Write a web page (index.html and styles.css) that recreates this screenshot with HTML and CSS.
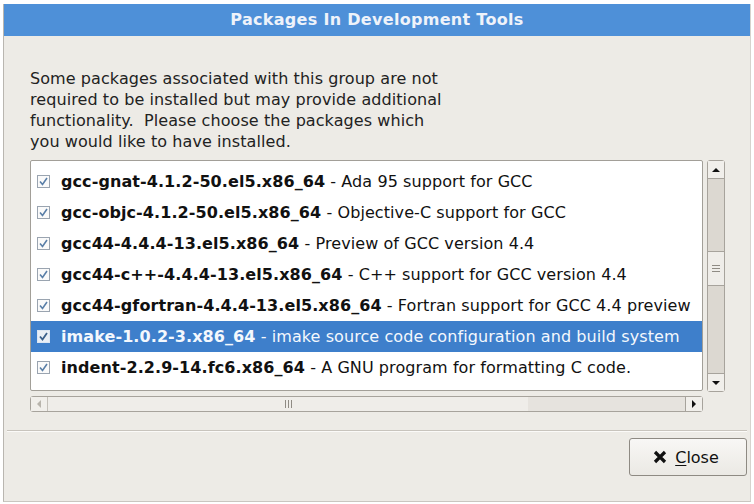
FILE: index.html
```html
<!DOCTYPE html>
<html>
<head>
<meta charset="utf-8">
<link rel="stylesheet" href="styles.css">
</head>
<body>
<div class="dialog">
  <div class="titlebar">Packages In Development Tools</div>
  <div class="content">
    <p class="intro">Some packages associated with this group are not<br>required to be installed but may provide additional<br>functionality.&nbsp; Please choose the packages which<br>you would like to have installed.</p>
    <div class="listwrap">
      <div class="listarea">
        <div class="list">
          <div class="row"><span class="cb"><svg width="11" height="11" viewBox="0 0 11 11"><path d="M2 5.5 L4.5 8.5 L9 2" fill="none" stroke="#5a7fa8" stroke-width="1.6"/></svg></span><b>gcc-gnat-4.1.2-50.el5.x86_64</b>&nbsp;- Ada 95 support for GCC</div>
          <div class="row"><span class="cb"><svg width="11" height="11" viewBox="0 0 11 11"><path d="M2 5.5 L4.5 8.5 L9 2" fill="none" stroke="#5a7fa8" stroke-width="1.6"/></svg></span><b>gcc-objc-4.1.2-50.el5.x86_64</b>&nbsp;- Objective-C support for GCC</div>
          <div class="row"><span class="cb"><svg width="11" height="11" viewBox="0 0 11 11"><path d="M2 5.5 L4.5 8.5 L9 2" fill="none" stroke="#5a7fa8" stroke-width="1.6"/></svg></span><b>gcc44-4.4.4-13.el5.x86_64</b>&nbsp;- Preview of GCC version 4.4</div>
          <div class="row"><span class="cb"><svg width="11" height="11" viewBox="0 0 11 11"><path d="M2 5.5 L4.5 8.5 L9 2" fill="none" stroke="#5a7fa8" stroke-width="1.6"/></svg></span><b>gcc44-c++-4.4.4-13.el5.x86_64</b>&nbsp;- C++ support for GCC version 4.4</div>
          <div class="row"><span class="cb"><svg width="11" height="11" viewBox="0 0 11 11"><path d="M2 5.5 L4.5 8.5 L9 2" fill="none" stroke="#5a7fa8" stroke-width="1.6"/></svg></span><b>gcc44-gfortran-4.4.4-13.el5.x86_64</b>&nbsp;- Fortran support for GCC 4.4 preview</div>
          <div class="row sel"><span class="cb"><svg width="11" height="11" viewBox="0 0 11 11"><path d="M2 5.5 L4.5 8.5 L9 2" fill="none" stroke="#3a5f8a" stroke-width="1.8"/></svg></span><b>imake-1.0.2-3.x86_64</b>&nbsp;- imake source code configuration and build system</div>
          <div class="row"><span class="cb"><svg width="11" height="11" viewBox="0 0 11 11"><path d="M2 5.5 L4.5 8.5 L9 2" fill="none" stroke="#5a7fa8" stroke-width="1.6"/></svg></span><b>indent-2.2.9-14.fc6.x86_64</b>&nbsp;- A GNU program for formatting C code.</div>
        </div>
        <div class="hscroll">
          <div class="hbtn"><svg width="6" height="8" viewBox="0 0 6 8"><path d="M5 0 L1 4 L5 8Z" fill="#b8b4ac"/></svg></div>
          <div class="htrack"><div class="hthumb"><span class="grip"></span></div></div>
          <div class="hbtn"><svg width="6" height="8" viewBox="0 0 6 8"><path d="M1 0 L5 4 L1 8Z" fill="#111"/></svg></div>
        </div>
      </div>
      <div class="vscroll">
        <div class="vbtn"><svg width="8" height="6" viewBox="0 0 8 6"><path d="M0 5 L4 1 L8 5Z" fill="#111"/></svg></div>
        <div class="vtrack"><div class="vthumb"><span class="vgrip"></span></div></div>
        <div class="vbtn"><svg width="8" height="6" viewBox="0 0 8 6"><path d="M0 1 L4 5 L8 1Z" fill="#111"/></svg></div>
      </div>
    </div>
  </div>
  <div class="sep"></div>
  <div class="buttons">
    <button class="btn"><svg width="14" height="14" viewBox="0 0 14 14"><path d="M2 2 L12 12 M12 2 L2 12" stroke="#111" stroke-width="3.2"/></svg><span><u>C</u>lose</span></button>
  </div>
</div>
</body>
</html>
```
FILE: styles.css
```css
html, body {
  margin: 0;
  padding: 0;
  background: #ffffff;
}
body {
  width: 754px;
  height: 504px;
  font-family: "DejaVu Sans", sans-serif;
  color: #111;
}
.dialog {
  box-sizing: border-box;
  margin: 4px 3px 0 3px;
  height: 498px;
  background: #edebe6;
  border-left: 1px solid #b9b6b0;
  border-right: 1px solid #d6d3cd;
  border-bottom: 1px solid #c9c6c0;
  display: flex;
  flex-direction: column;
}
.titlebar {
  height: 32px;
  background: #4e90d8;
  color: #eef3fa;
  font-weight: bold;
  font-size: 16px;
  text-align: center;
  line-height: 32px;
  letter-spacing: 0.3px;
}
.content {
  padding: 32px 25px 0 26px;
}
.intro {
  margin: 0;
  font-size: 16px;
  line-height: 21px;
  color: #222;
  letter-spacing: 0.08px;
}
.listwrap {
  margin-top: 8px;
  display: flex;
  gap: 4px;
  height: 252px;
}
.listarea {
  flex: 1;
  display: flex;
  flex-direction: column;
}
.list {
  height: 231px;
  box-sizing: border-box;
  background: #fff;
  border: 1px solid #a29f98;
  border-radius: 2px;
  padding-top: 5px;
  overflow: hidden;
}
.row {
  height: 31px;
  display: flex;
  align-items: center;
  font-size: 16px;
  white-space: nowrap;
  padding-left: 6px;
  color: #111;
  letter-spacing: 0.08px;
}
.row b { font-weight: bold; }
.row.sel {
  background: #3e7fcb;
  color: #f4f8fd;
}
.cb {
  width: 13px;
  height: 13px;
  box-sizing: border-box;
  border: 1px solid #9aa4b0;
  background: #fafafa;
  margin-right: 11px;
  display: flex;
  align-items: center;
  justify-content: center;
}
.sel .cb { background: #e9eef5; border-color: #dbe5f2; }
.hscroll {
  margin: 5px 0 0 0;
  height: 16px;
  display: flex;
  box-sizing: border-box;
  border: 1px solid #a7a39c;
  border-radius: 3px;
  background: #e6e3de;
}
.hbtn {
  width: 16px;
  display: flex;
  align-items: center;
  justify-content: center;
  background: #f1efeb;
}
.hbtn:first-child { border-right: 1px solid #c4c0b9; }
.hbtn:last-child { border-left: 1px solid #a7a39c; }
.htrack {
  flex: 1;
  display: flex;
}
.hthumb {
  width: 480px;
  background: #efede9;
  display: flex;
  align-items: center;
  justify-content: center;
}
.grip {
  width: 7px;
  height: 8px;
  background: repeating-linear-gradient(90deg, #8f8b84 0 1px, transparent 1px 3px);
}
.vscroll {
  width: 18px;
  height: 232px;
  box-sizing: border-box;
  border: 1px solid #a7a39c;
  border-radius: 3px;
  display: flex;
  flex-direction: column;
  background: #dcd8d1;
}
.vbtn {
  height: 17px;
  display: flex;
  align-items: center;
  justify-content: center;
  background: #f1efeb;
}
.vbtn:first-child { border-bottom: 1px solid #a7a39c; }
.vbtn:last-child { border-top: 1px solid #a7a39c; }
.vtrack {
  flex: 1;
  display: flex;
  flex-direction: column;
}
.vthumb {
  margin-top: 72px;
  height: 35px;
  background: #efede9;
  border-top: 1px solid #a7a39c;
  border-bottom: 1px solid #a7a39c;
  display: flex;
  align-items: center;
  justify-content: center;
  box-sizing: border-box;
}
.vgrip {
  width: 8px;
  height: 7px;
  background: repeating-linear-gradient(180deg, #8f8b84 0 1px, transparent 1px 3px);
}
.sep {
  margin: 18px 3px 0 3px;
  height: 0;
  border-top: 1px solid #c8c4bd;
  border-bottom: 1px solid #fbfaf8;
}
.buttons {
  display: flex;
  justify-content: flex-end;
  padding: 6px 3px 0 0;
}
.btn {
  width: 118px;
  height: 38px;
  box-sizing: border-box;
  border: 1px solid #8e8a83;
  border-radius: 3px;
  background: linear-gradient(#f8f7f5, #ebe9e4);
  display: flex;
  align-items: center;
  justify-content: center;
  gap: 8px;
  font-family: "DejaVu Sans", sans-serif;
  font-size: 16px;
  color: #111;
  padding: 0 4px 0 0;
}
.btn u { text-underline-offset: 2px; }
```
